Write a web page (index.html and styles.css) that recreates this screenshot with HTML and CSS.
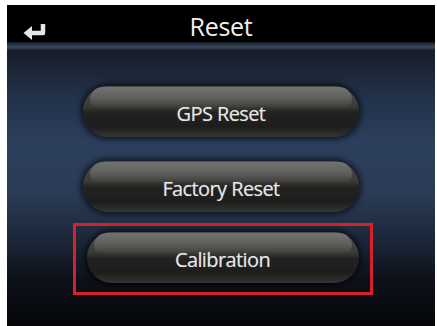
FILE: index.html
```html
<!DOCTYPE html>
<html>
<head>
<meta charset="utf-8">
<link rel="stylesheet" href="styles.css">
</head>
<body>
<div class="screen">
  <div class="header">
    <div class="back">
      <svg width="26" height="20" viewBox="0 0 26 20">
        <path d="M21 2 V11 H9" fill="none" stroke="#e6e6e6" stroke-width="4.5" stroke-linejoin="round"/>
        <path d="M1.5 11 L10 4 L10 18 Z" fill="#e6e6e6"/>
      </svg>
    </div>
    <div class="title">Reset</div>
    <div></div>
  </div>
  <div class="band"></div>
  <div class="content">
    <div class="pill">GPS Reset</div>
    <div class="pill second">Factory Reset</div>
    <div class="frame">
      <div class="pill inner">Calibration</div>
    </div>
  </div>
</div>
</body>
</html>
```
FILE: styles.css
```css
html, body {
  margin: 0;
  padding: 0;
  background: #ffffff;
}
.screen {
  margin: 5px 0 0 7px;
  width: 428px;
  height: 321px;
  display: flex;
  flex-direction: column;
  background: linear-gradient(to bottom, #000 0px, #000 37px, #161c26 45px, #22314a 90px, #2c3f5c 140px, #2a3b56 190px, #1a2435 240px, #0d1119 275px, #050608 321px);
  font-family: "Open Sans", "DejaVu Sans", sans-serif;
  overflow: hidden;
}
.header {
  height: 37px;
  background: #000;
  display: grid;
  grid-template-columns: 1fr auto 1fr;
  align-items: center;
}
.back {
  padding: 16px 0 0 15px;
  display: flex;
}
.title {
  color: #efefef;
  font-size: 25px;
  padding-top: 4px;
  letter-spacing: -0.3px;
}
.band {
  height: 8px;
  background: linear-gradient(to bottom, #101820 0px, #2a3746 3px, #3b4a5c 5px, #1d2632 8px);
}
.content {
  display: flex;
  flex-direction: column;
  align-items: center;
  padding-top: 36px;
}
.pill {
  position: relative;
  z-index: 0;
  width: 276px;
  height: 51px;
  border-radius: 26px;
  background: linear-gradient(to bottom, #4e4e4b 0%, #3a3a38 40%, #222221 52%, #1d1d1c 80%, #353533 100%);
  box-shadow: 0 0 5px 3px rgba(0, 0, 0, 0.55);
  display: flex;
  align-items: center;
  justify-content: center;
  color: #e6e6e6;
  font-size: 20px;
  letter-spacing: -0.6px;
  padding-top: 4px;
  box-sizing: border-box;
  text-shadow: 0 0 1px rgba(255, 255, 255, 0.4);
}
.pill::before {
  content: "";
  position: absolute;
  z-index: -1;
  top: 1px;
  left: 7px;
  right: 7px;
  height: 21px;
  border-radius: 18px 18px 12px 12px;
  background: linear-gradient(to bottom, #72726f 0%, #62625e 45%, rgba(70, 70, 67, 0) 100%);
}
.second {
  margin-top: 24px;
}
.frame {
  margin-top: 11px;
  width: 300px;
  height: 72px;
  border: 3px solid #d8202a;
  box-sizing: border-box;
  display: flex;
  justify-content: center;
  padding-top: 6px;
  margin-left: 3px;
}
.inner {
  width: 272px;
}
```
